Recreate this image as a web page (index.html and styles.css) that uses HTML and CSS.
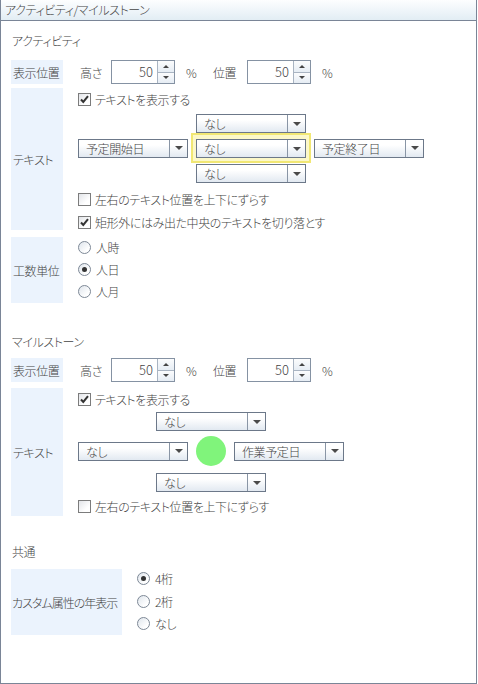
FILE: index.html
```html
<!DOCTYPE html>
<html lang="ja">
  <head>
    <meta charset="UTF-8" />
    <title>アクティビティ/マイルストーン</title>
    <link rel="stylesheet" href="styles.css">
  </head>
  <body>
    <div class="panel">
      <div class="panel-header">アクティビティ/マイルストーン</div>

      <!-- アクティビティ -->
      <div class="group-title title-activity">アクティビティ</div>

      <div class="row row-pos">
        <div class="row-label">表示位置</div>
        <div class="pos">
          <span class="pos-name name-height">高さ</span>
          <span class="spin"><span class="spin-value">50</span><span class="spin-btns"><span class="spin-up"></span><span class="spin-down"></span></span></span>
          <span class="unit">%</span>
          <span class="pos-name name-place">位置</span>
          <span class="spin"><span class="spin-value">50</span><span class="spin-btns"><span class="spin-up"></span><span class="spin-down"></span></span></span>
          <span class="unit unit-last">%</span>
        </div>
      </div>

      <div class="row row-text-activity">
        <div class="row-label">テキスト</div>
        <div class="row-content">
          <label class="check"><span class="check-box on"></span>テキストを表示する</label>
          <div class="combo-block block-activity">
            <div class="combo"><span class="combo-text">なし</span><span class="combo-arrow"></span></div>
            <div class="combo-mid">
              <div class="combo"><span class="combo-text">予定開始日</span><span class="combo-arrow"></span></div>
              <div class="combo-focus">
                <div class="combo"><span class="combo-text">なし</span><span class="combo-arrow"></span></div>
              </div>
              <div class="combo"><span class="combo-text">予定終了日</span><span class="combo-arrow"></span></div>
            </div>
            <div class="combo combo-bottom"><span class="combo-text">なし</span><span class="combo-arrow"></span></div>
          </div>
          <label class="check check-after"><span class="check-box"></span>左右のテキスト位置を上下にずらす</label>
          <label class="check"><span class="check-box on"></span>矩形外にはみ出た中央のテキストを切り落とす</label>
        </div>
      </div>

      <div class="row row-unit">
        <div class="row-label">工数単位</div>
        <div class="row-content radios">
          <label class="radio"><span class="radio-dot"></span>人時</label>
          <label class="radio"><span class="radio-dot on"></span>人日</label>
          <label class="radio"><span class="radio-dot"></span>人月</label>
        </div>
      </div>

      <!-- マイルストーン -->
      <div class="group-title title-milestone">マイルストーン</div>

      <div class="row row-pos">
        <div class="row-label">表示位置</div>
        <div class="pos">
          <span class="pos-name name-height">高さ</span>
          <span class="spin"><span class="spin-value">50</span><span class="spin-btns"><span class="spin-up"></span><span class="spin-down"></span></span></span>
          <span class="unit">%</span>
          <span class="pos-name name-place">位置</span>
          <span class="spin"><span class="spin-value">50</span><span class="spin-btns"><span class="spin-up"></span><span class="spin-down"></span></span></span>
          <span class="unit unit-last">%</span>
        </div>
      </div>

      <div class="row row-text-milestone">
        <div class="row-label">テキスト</div>
        <div class="row-content">
          <label class="check"><span class="check-box on"></span>テキストを表示する</label>
          <div class="combo-block block-milestone">
            <div class="combo"><span class="combo-text">なし</span><span class="combo-arrow"></span></div>
            <div class="combo-mid mid-milestone">
              <div class="combo"><span class="combo-text">なし</span><span class="combo-arrow"></span></div>
              <span class="marker"></span>
              <div class="combo"><span class="combo-text">作業予定日</span><span class="combo-arrow"></span></div>
            </div>
            <div class="combo combo-bottom"><span class="combo-text">なし</span><span class="combo-arrow"></span></div>
          </div>
          <label class="check check-after-ms"><span class="check-box"></span>左右のテキスト位置を上下にずらす</label>
        </div>
      </div>

      <!-- 共通 -->
      <div class="group-title title-common">共通</div>

      <div class="row row-year">
        <div class="row-label label-wide">カスタム属性の年表示</div>
        <div class="row-content radios radios-year">
          <label class="radio"><span class="radio-dot on"></span>4桁</label>
          <label class="radio"><span class="radio-dot"></span>2桁</label>
          <label class="radio"><span class="radio-dot"></span>なし</label>
        </div>
      </div>
    </div>
  </body>
</html>
```

FILE: styles.css
```css
body {
  margin: 0;
  font-family: "Noto Sans CJK JP", "Noto Sans", sans-serif;
  font-size: 12px;
  font-weight: 300;
  font-feature-settings: "palt";
  letter-spacing: -0.4px;
  color: #444;
  background: #fff;
}

.panel {
  width: 477px;
  height: 684px;
  box-sizing: border-box;
  border: 1px solid #7a8597;
  border-top: none;
  overflow: hidden;
}

.panel-header {
  height: 20px;
  line-height: 20px;
  padding-left: 4px;
  border-bottom: 1px solid #7a8597;
  background: linear-gradient(#fdfeff, #e2edf4);
}

.group-title {
  height: 20px;
  line-height: 20px;
  padding-left: 11px;
}
.title-activity {
  margin: 10px 0 9px;
}
.title-milestone {
  margin: 29px 0 6px;
}
.title-common {
  margin: 26px 0 7px;
}

/* 行 */
.row {
  display: flex;
  margin-left: 10px;
}
.row-label {
  width: 52px;
  flex-shrink: 0;
  display: flex;
  align-items: center;
  padding-left: 2px;
  box-sizing: border-box;
  white-space: nowrap;
  background: #ebf3fd;
}
.label-wide {
  width: 111px;
  padding-left: 1px;
  letter-spacing: -1px;
}
.row-content {
  display: flex;
  flex-direction: column;
  align-items: flex-start;
  margin-left: 15px;
  white-space: nowrap;
}

.row-pos {
  height: 24px;
}
.row-text-activity {
  height: 142px;
  margin-top: 4px;
}
.row-unit {
  height: 66px;
  margin-top: 7px;
}
.row-text-milestone {
  height: 128px;
  margin-top: 6px;
}
.row-year {
  height: 66px;
}

/* 高さ・位置 */
.pos {
  display: flex;
  align-items: center;
  margin-left: 17px;
}
.pos-name {
  flex-shrink: 0;
}
.name-height {
  width: 31px;
}
.name-place {
  width: 34px;
}
.unit {
  width: 27px;
  margin-left: 11px;
}
.unit-last {
  margin-left: 11px;
}

.spin {
  display: flex;
  width: 64px;
  height: 24px;
  box-sizing: border-box;
  border: 1px solid #8592a3;
  background: #fff;
}
.spin-value {
  flex: 1;
  text-align: right;
  line-height: 22px;
  padding-right: 4px;
  font-size: 13px;
  letter-spacing: 0;
}
.spin-btns {
  width: 16px;
  display: flex;
  flex-direction: column;
  border-left: 1px solid #a9b4c2;
}
.spin-up,
.spin-down {
  flex: 1;
  display: flex;
  align-items: center;
  justify-content: center;
  background: linear-gradient(#fbfcfd, #e6edf4);
}
.spin-up {
  border-bottom: 1px solid #a9b4c2;
}
.spin-up::after {
  content: "";
  border-left: 3px solid transparent;
  border-right: 3px solid transparent;
  border-bottom: 3px solid #444;
}
.spin-down::after {
  content: "";
  border-left: 3px solid transparent;
  border-right: 3px solid transparent;
  border-top: 3px solid #444;
}

/* チェックボックス */
.check {
  display: flex;
  align-items: center;
  height: 23px;
  flex-shrink: 0;
}
.check-box {
  width: 13px;
  height: 13px;
  flex-shrink: 0;
  box-sizing: border-box;
  margin-right: 4px;
  border: 1px solid #7c7c7c;
  background: linear-gradient(135deg, #e2e4e8, #fff 70%);
}
.check-box.on {
  background-image: url("data:image/svg+xml,%3Csvg xmlns='http://www.w3.org/2000/svg' width='11' height='11'%3E%3Cpath d='M2 5.5 L4.3 8 L9 2.2' fill='none' stroke='%23333' stroke-width='2'/%3E%3C/svg%3E"),
    linear-gradient(135deg, #e2e4e8, #fff 70%);
}
.check-after {
  margin-top: 5px;
}
.check-after-ms {
  margin-top: 3px;
}

/* コンボボックス */
.combo-block {
  display: flex;
  flex-direction: column;
  align-items: center;
  flex-shrink: 0;
}
.block-activity {
  margin-top: 3px;
}
.block-milestone {
  margin-top: 1px;
}
.combo-mid {
  display: flex;
  align-items: center;
  gap: 3px;
}
.mid-milestone {
  gap: 8px;
  margin: 5px 0 7px;
}
.block-activity .combo-bottom {
  margin-top: 1px;
}

.combo {
  display: flex;
  width: 110px;
  height: 19px;
  box-sizing: border-box;
  border: 1px solid #6c7889;
  background: linear-gradient(#fff 30%, #e2e9f1);
}
.combo-text {
  flex: 1;
  line-height: 17px;
  padding-left: 7px;
}
.combo-arrow {
  width: 17px;
  display: flex;
  align-items: center;
  justify-content: center;
  border-left: 1px solid #8995a5;
}
.combo-arrow::after {
  content: "";
  border-left: 4px solid transparent;
  border-right: 4px solid transparent;
  border-top: 4px solid #4a4a4a;
}

.combo-focus {
  padding: 4px 3px 3px;
  border: 2px solid #f1e774;
  background: #fcf8c9;
}

.marker {
  width: 30px;
  height: 30px;
  border-radius: 50%;
  background: #80f47b;
}

/* ラジオボタン */
.radios {
  margin-top: -1px;
}
.radios-year {
  margin-top: -2px;
}
.radio {
  display: flex;
  align-items: center;
  height: 23px;
}
.radios-year .radio {
  height: 24px;
}
.radio-dot {
  width: 13px;
  height: 13px;
  flex-shrink: 0;
  box-sizing: border-box;
  margin-right: 5px;
  border: 1px solid #7d8896;
  border-radius: 50%;
  background: linear-gradient(135deg, #dfe5ec, #fff 75%);
  display: flex;
  align-items: center;
  justify-content: center;
}
.radio-dot.on::after {
  content: "";
  width: 5px;
  height: 5px;
  border-radius: 50%;
  background: #333;
}
```
